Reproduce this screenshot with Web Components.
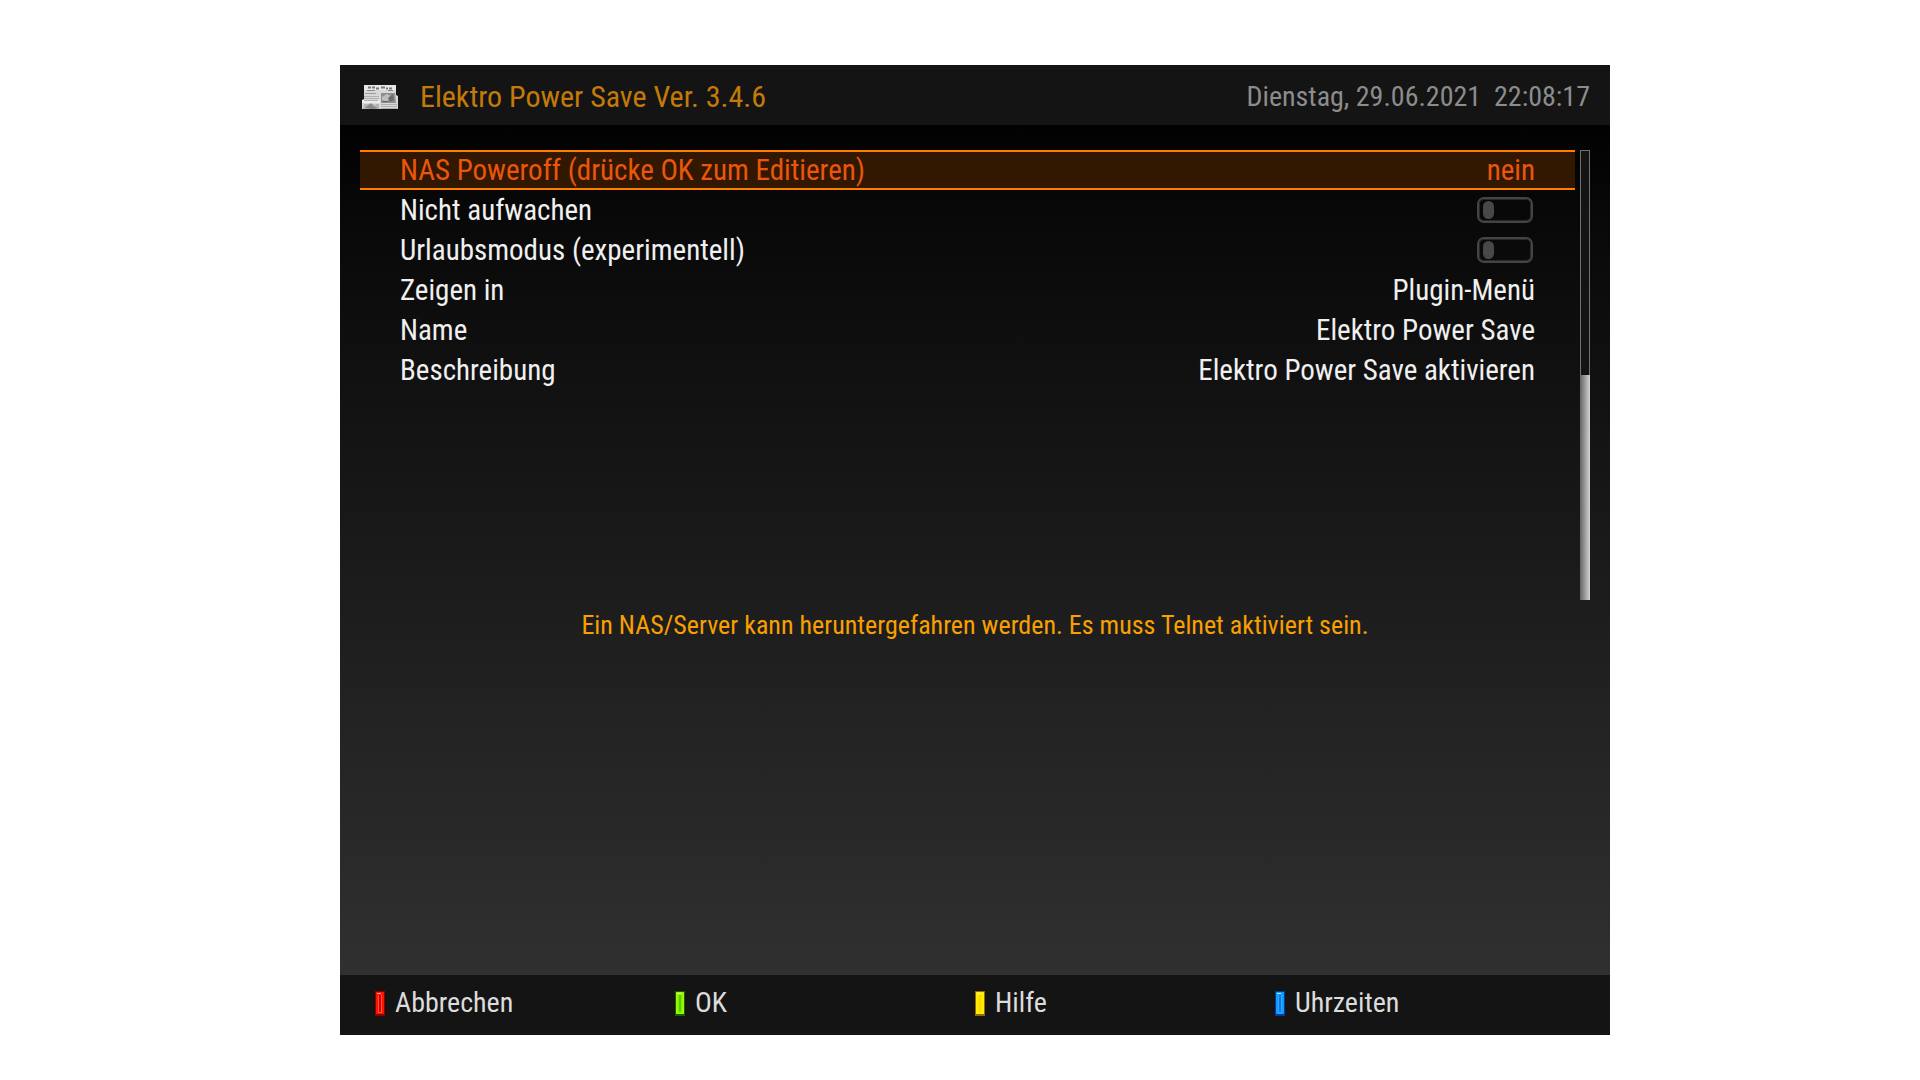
<!DOCTYPE html>
<html lang="de">
<head>
<meta charset="utf-8">
<title>Elektro Power Save</title>
<style>
  body {
    margin: 0;
    background: #fff;
    font-family: "Roboto Condensed", Roboto, "Liberation Sans", sans-serif;
  }
</style>
</head>
<body>
<power-save-screen></power-save-screen>

<template id="screen-tpl">
  <style>
    :host {
      display: flex;
      box-sizing: border-box;
      min-height: 100vh;
      padding: 65px 310px 45px 340px;
    }
    .panel {
      flex: 1;
      min-width: 0;
      display: flex;
      flex-direction: column;
      background: #141414;
    }
    main {
      flex: 1;
      display: flex;
      flex-direction: column;
      gap: 10px;
      padding: 25px 20px;
      background: linear-gradient(#020202, #090909 12%, #303030);
    }
    .list-area {
      display: flex;
      gap: 5px;
      min-height: 450px;
    }
    .rows { flex: 1; min-width: 0; }
    .hint {
      margin: 0;
      text-align: center;
      color: #f8a000;
      font-size: 26px;
      line-height: 30px;
    }
    footer {
      display: grid;
      grid-template-columns: repeat(4, 1fr);
      align-items: center;
      box-sizing: border-box;
      height: 60px;
      padding: 0 35px 4px;
    }
  </style>
  <div class="panel">
    <title-bar>
      <news-icon slot="icon"></news-icon>
      <span slot="title">Elektro Power Save Ver. 3.4.6</span>
      <time slot="clock" datetime="2021-06-29T22:08:17">Dienstag, 29.06.2021&nbsp; 22:08:17</time>
    </title-bar>
    <main>
      <div class="list-area">
        <div class="rows">
          <setting-row kind="button" label="NAS Poweroff (drücke OK zum Editieren)" value="nein" selected></setting-row>
          <setting-row kind="toggle" label="Nicht aufwachen"></setting-row>
          <setting-row kind="toggle" label="Urlaubsmodus (experimentell)"></setting-row>
          <setting-row kind="select" label="Zeigen in" value="Plugin-Menü"></setting-row>
          <setting-row kind="text" label="Name" value="Elektro Power Save"></setting-row>
          <setting-row kind="text" label="Beschreibung" value="Elektro Power Save aktivieren"></setting-row>
        </div>
        <scroll-track></scroll-track>
      </div>
      <p class="hint">Ein NAS/Server kann heruntergefahren werden. Es muss Telnet aktiviert sein.</p>
    </main>
    <footer>
      <color-key style="--edge:#8c0000;--body:#ff1400;--core:#ff5040;--line:#d80000;--shine:#ffa0a0">Abbrechen</color-key>
      <color-key style="--edge:#1c5c00;--body:#94fa00;--core:#84ec00;--line:#5cc800;--shine:#e8ffc0">OK</color-key>
      <color-key style="--edge:#8a6c00;--body:#ffec00;--core:#ffe400;--line:#ffd800;--shine:#fff890">Hilfe</color-key>
      <color-key style="--edge:#003c98;--body:#109cff;--core:#30a8ff;--line:#0878e8;--shine:#b0e4ff">Uhrzeiten</color-key>
    </footer>
  </div>
</template>

<template id="title-tpl">
  <style>
    :host {
      display: flex;
      align-items: center;
      gap: 20px;
      box-sizing: border-box;
      height: 60px;
      padding: 3px 20px 0;
    }
    .title { flex: 1; margin: 0; font-size: 30px; font-weight: 400; line-height: 40px; color: #c47a08; }
    .clock { font-size: 28px; line-height: 40px; color: #8c8c8c; }
  </style>
  <slot name="icon"></slot>
  <h1 class="title"><slot name="title"></slot></h1>
  <div class="clock"><slot name="clock"></slot></div>
</template>

<template id="news-tpl">
  <style>
    :host { display: block; width: 40px; height: 40px; }
    svg { display: block; }
  </style>
  <svg width="40" height="40" viewBox="0 2 40 40" aria-hidden="true">
    <path d="M4 10H36V20L38 21V34H2V25L4 24Z" fill="#d8d8d8"/>
    <path d="M4 10H36V15H4Z" fill="#e8e8e8"/>
    <path d="M2 25H20V28H2Z" fill="#eee"/>
    <path d="M8 12.500h3m1 0h3m1 1h3m2-1h4m1 1h2m1 0h3" stroke="#777" stroke-width="2" fill="none"/>
    <path d="M7 15.500h8m13 0h5" stroke="#888" fill="none"/>
    <path d="M5 18.500h11" stroke="#999" fill="none"/>
    <path d="M4 21.500h15M4 23.500h15M4 25.500h14M21 29.500h16M21 31.500h16M21 33.500h16" stroke="#b0b0b0" fill="none"/>
    <path d="M21 18h14l1 10H21Z" fill="#8f8f8f"/>
    <path d="M22 22l5-3 4 2-4 6-5-2Z" fill="#bebebe"/>
    <path d="M28 23l5-4 1 6-4 2Z" fill="#6c6c6c"/>
    <path d="M23 26.500h5" stroke="#666"/>
    <path d="M4 29h15v5H3Z" fill="#b4b4b4"/>
    <path d="M5 33l6-5 2 3 5 2-6 1Z" fill="#888"/>
    <path d="M12 28l3-1 1 3Z" fill="#ddd"/>
  </svg>
</template>

<template id="row-tpl">
  <style>
    :host {
      display: flex;
      align-items: center;
      justify-content: space-between;
      box-sizing: border-box;
      height: 40px;
      padding: 0 40px;
      color: #f0f0f0;
      font-size: 29px;
      line-height: 36px;
    }
    :host([selected]) {
      color: #ea560c;
      background: #321800;
      border: solid #ff7e00;
      border-width: 2px 0;
    }
    label { white-space: nowrap; }
    button, select, input[type=text] {
      flex: 1;
      min-width: 0;
      margin: 0;
      padding: 0;
      border: 0;
      outline: 0;
      background: none;
      color: inherit;
      font: inherit;
      height: 36px;
      text-align: right;
      text-align-last: right;
      appearance: none;
    }
    input[type=checkbox] {
      appearance: none;
      box-sizing: border-box;
      display: flex;
      align-items: center;
      width: 56px;
      height: 26px;
      margin: 0 2px 0 0;
      padding: 0 4px;
      border: 2px solid #444;
      border-radius: 7px;
      box-shadow: inset 0 0 0 1px #282828;
    }
    input[type=checkbox]::before {
      content: "";
      width: 11px;
      height: 18px;
      border-radius: 6px;
      background: #484848;
    }
    input[type=checkbox]:checked { justify-content: flex-end; }
  </style>
  <label for="control"></label>
</template>

<template id="scroll-tpl">
  <style>
    :host {
      display: flex;
      flex-direction: column;
      width: 10px;
    }
    div { box-sizing: border-box; height: 50%; }
    .track {
      border: 1px solid #707070;
      border-bottom: 0;
      background: #141414;
    }
    .thumb { background: linear-gradient(90deg, #646464, #d4d4d4); }
  </style>
  <div class="track"></div>
  <div class="thumb"></div>
</template>

<template id="key-tpl">
  <style>
    :host { display: block; }
    button {
      display: flex;
      align-items: center;
      gap: 10px;
      margin: 0;
      padding: 0;
      border: 0;
      background: none;
      color: #dcdcdc;
      font: inherit;
      font-size: 28px;
      line-height: 40px;
    }
    svg { display: block; }
  </style>
  <button type="button">
    <svg width="10" height="25" viewBox="0 0 10 25" aria-hidden="true">
      <rect width="10" height="25" fill="var(--edge)"/>
      <rect x="1" y="1" width="8" height="22" fill="var(--body)"/>
      <rect x="3" y="4" width="4" height="18" fill="var(--core)"/>
      <rect x="4" y="4" width="2" height="17" fill="var(--line)"/>
      <rect x="2" y="2" width="4" height="1" fill="var(--shine)"/>
    </svg>
    <span><slot></slot></span>
  </button>
</template>

<script>
  class TemplateElement extends HTMLElement {
    constructor() {
      super();
      const tpl = document.getElementById(this.constructor.template);
      this.attachShadow({ mode: "open" }).append(tpl.content.cloneNode(true));
    }
  }

  class NewsIcon extends TemplateElement { static template = "news-tpl"; }
  class TitleBar extends TemplateElement { static template = "title-tpl"; }
  class ScrollTrack extends TemplateElement { static template = "scroll-tpl"; }
  class ColorKey extends TemplateElement { static template = "key-tpl"; }

  class SettingRow extends TemplateElement {
    static template = "row-tpl";

    connectedCallback() {
      if (this.control) return;
      this.shadowRoot.querySelector("label").textContent = this.getAttribute("label");
      this.control = this.buildControl(this.getAttribute("kind"), this.getAttribute("value"));
      this.control.id = "control";
      this.shadowRoot.append(this.control);
    }

    buildControl(kind, value) {
      if (kind === "button") {
        const button = document.createElement("button");
        button.type = "button";
        button.textContent = value;
        return button;
      }
      if (kind === "select") {
        const select = document.createElement("select");
        select.add(new Option(value));
        return select;
      }
      const input = document.createElement("input");
      input.type = kind === "toggle" ? "checkbox" : "text";
      if (kind === "text") input.value = value;
      return input;
    }
  }

  class PowerSaveScreen extends TemplateElement { static template = "screen-tpl"; }

  customElements.define("news-icon", NewsIcon);
  customElements.define("title-bar", TitleBar);
  customElements.define("scroll-track", ScrollTrack);
  customElements.define("color-key", ColorKey);
  customElements.define("setting-row", SettingRow);
  customElements.define("power-save-screen", PowerSaveScreen);
</script>
</body>
</html>
